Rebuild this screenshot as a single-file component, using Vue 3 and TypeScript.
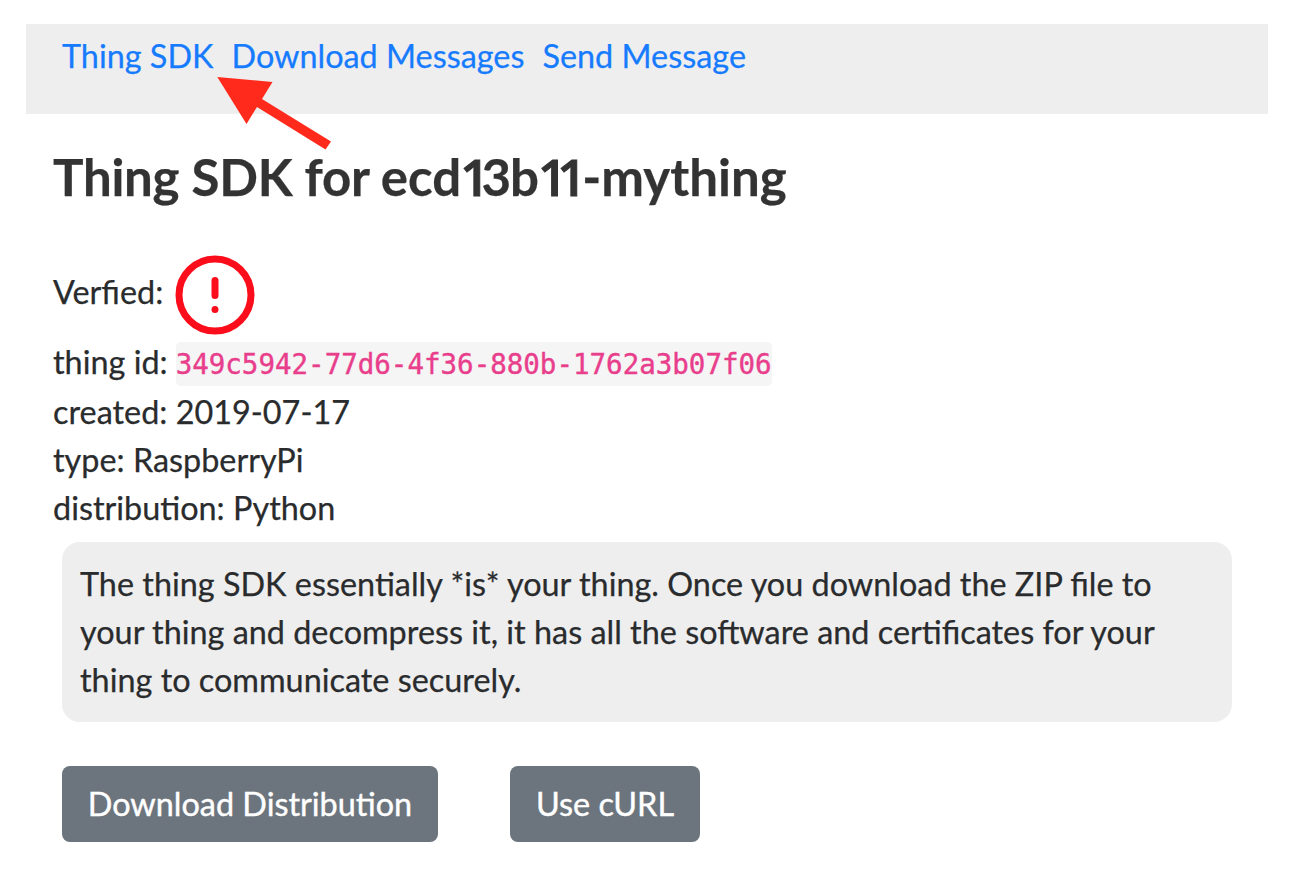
<script setup lang="ts">
const links: string[] = ['Thing SDK', 'Download Messages', 'Send Message']
const details: { label: string; value: string }[] = [
  { label: 'created', value: '2019-07-17' },
  { label: 'type', value: 'RaspberryPi' },
  { label: 'distribution', value: 'Python' },
]
</script>

<template>
  <main class="page">
    <nav class="nav">
      <a v-for="link in links" :key="link" class="link">{{ link }}</a>
      <svg class="arrow" width="116" height="78" viewBox="0 0 116 78">
        <path d="M1.3 2L56.5 7L46 24L115 66.5L109.5 74.5L41 32L30.5 49Z" fill="#ff2a1c" />
      </svg>
    </nav>
    <section class="content">
      <h1 class="title"><span class="lead">Thing SDK for </span>ecd<span class="one">1</span><span class="digit">3</span>b<span class="one">1</span><span class="one">1</span><span class="dash">-</span>mything</h1>
      <div class="verified">
        <span class="verified-label">Verfied:</span>
        <svg class="alert" width="80" height="80" viewBox="0 0 80 80" fill="none" stroke="#fc0d1b" stroke-width="7" stroke-linecap="round">
          <circle cx="40" cy="40" r="36" />
          <path d="M40 25.5V40.5M40 54.5V54.6" />
        </svg>
      </div>
      <div class="row id-row"><span>thing id:</span><code class="code">349c5942-77d6-4f36-880b-1762a3b07f06</code></div>
      <div v-for="d in details" :key="d.label" class="row">{{ d.label }}: {{ d.value }}</div>
      <p class="note">The thing SDK essentially *is* your thing. Once you download the ZIP file to your thing and decompress it, it has all the software and certificates for your thing to communicate securely.</p>
      <div class="actions">
        <button class="btn">Download Distribution</button>
        <button class="btn curl">Use cURL</button>
      </div>
    </section>
  </main>
</template>

<style>
body { margin: 0; background: #fff; }
</style>

<style scoped>
.page { box-sizing: border-box; width: 1310px; height: 878px; padding: 24px 42px 0 26px; overflow: hidden; font: 32.38px/48px Lato, sans-serif; color: #292b2d; -webkit-text-stroke: 0.25px currentColor; }
.nav { position: relative; box-sizing: border-box; height: 90px; padding: 8px 36px; display: flex; gap: 18px; background: #eee; }
.link { color: #167bff; white-space: nowrap; }
.arrow { position: absolute; left: 190px; top: 51px; }
.content { padding: 0 36px 0 27px; }
.title { height: 64px; margin: 30px 0 0; font: 700 51px/64px Lato, sans-serif; color: #333; white-space: nowrap; }
.lead { letter-spacing: -0.25px; }
.one { margin-left: -1px; font-family: "Open Sans", sans-serif; font-weight: 600; letter-spacing: -9px; -webkit-text-stroke: 1px currentColor; }
.digit { margin-left: 1px; letter-spacing: -1px; }
.dash { margin: 0 0 0 5px; }
.verified { display: flex; align-items: center; gap: 12px; height: 84px; margin-top: 45px; }
.verified-label { padding-bottom: 6px; }
.row { height: 48px; white-space: nowrap; }
.id-row { display: flex; gap: 8px; height: 50px; margin-top: 1px; }
.code { height: 44px; margin-top: 4px; border-radius: 5px; background: #f5f5f5; color: #e83e8c; font: 27.5px/45px "DejaVu Sans Mono", monospace; -webkit-text-stroke: 0.4px currentColor; }
.note { box-sizing: border-box; width: 1170px; height: 180px; margin: 10px 0 0 9px; padding: 18px; border-radius: 18px; background: #eee; }
.actions { display: flex; gap: 72px; margin: 44px 0 0 9px; }
.btn { box-sizing: border-box; width: 376px; height: 76px; padding: 0; border: 0; border-radius: 8px; background: #6c757d; color: #fff; font: 32.38px/48px Lato, sans-serif; -webkit-text-stroke: 0.4px currentColor; }
.curl { width: 190px; }
</style>
